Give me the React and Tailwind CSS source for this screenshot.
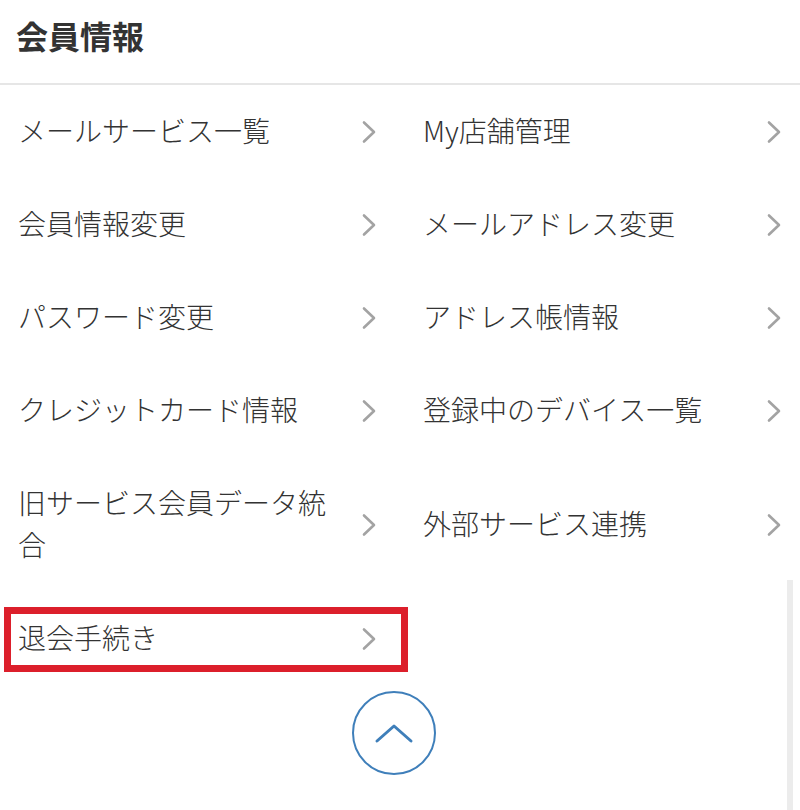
import React from "react";

const items = [
  ["メールサービス一覧", "My店舗管理"],
  ["会員情報変更", "メールアドレス変更"],
  ["パスワード変更", "アドレス帳情報"],
  ["クレジットカード情報", "登録中のデバイス一覧"],
  ["旧サービス会員データ統合", "外部サービス連携"],
];

function Chevron() {
  return (
    <svg width="16" height="24" viewBox="0 0 16 24" className="mt-[3px] shrink-0">
      <path d="M3 2.5 L13 12 L3 21.5" fill="none" stroke="#a3a3a3" strokeWidth="2.6" strokeLinecap="round" strokeLinejoin="round" />
    </svg>
  );
}

function Row({ label, highlight }) {
  return (
    <div className="relative flex items-center justify-between gap-[20px] pt-[24px] pb-[27px]">
      <span className="max-w-[325px] text-[28px] font-light leading-[42px] text-[#333333]">{label}</span>
      <Chevron />
      {highlight && (
        <span className="pointer-events-none absolute left-[-14px] right-[-31px] top-[15px] bottom-[13px] border-[7px] border-[#dc1f2b]" />
      )}
    </div>
  );
}

export default function App() {
  return (
    <div
      className="relative h-[810px] w-[800px] overflow-hidden bg-white"
      style={{ fontFamily: '"Noto Sans CJK JP", "Noto Sans", sans-serif' }}
    >
      <header className="border-b-2 border-[#e6e6e6] px-[16px] pt-[9px] pb-[22px]">
        <h1 className="text-[32px] font-bold leading-[52px] text-[#333333]">会員情報</h1>
      </header>

      <div className="grid grid-cols-2 gap-x-[46px] px-[18px]">
        {items.map(([left, right]) => (
          <React.Fragment key={left}>
            <Row label={left} />
            <Row label={right} />
          </React.Fragment>
        ))}
        <Row label="退会手続き" highlight />
      </div>

      <div className="mt-[6px] flex justify-center pr-[12px]">
        <button className="flex h-[84px] w-[84px] items-center justify-center rounded-full border-2 border-[#3f7fba] bg-white">
          <svg width="40" height="22" viewBox="0 0 40 22">
            <path d="M3 19 L20 4 L37 19" fill="none" stroke="#3f7fba" strokeWidth="3" strokeLinecap="round" strokeLinejoin="round" />
          </svg>
        </button>
      </div>

      <div className="absolute right-[7px] top-[580px] bottom-0 w-[6px] bg-[#ececec]" />
    </div>
  );
}
